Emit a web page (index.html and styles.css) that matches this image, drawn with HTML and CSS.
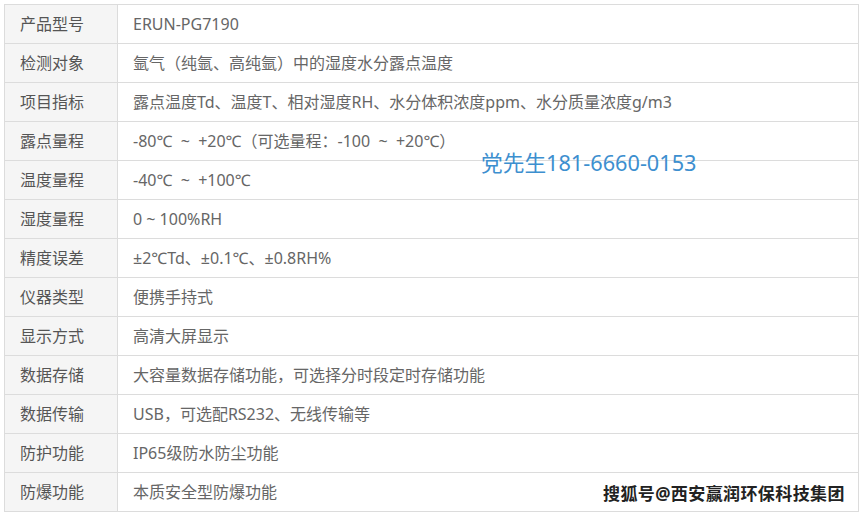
FILE: index.html
```html
<!DOCTYPE html>
<html lang="zh-CN">
<head>
    <meta charset="UTF-8">
    <title>产品参数</title>
    <link rel="stylesheet" href="styles.css">
</head>
<body>

    <!-- Spec table -->
    <div class="sheet">
        <table class="specs">
            <tr><th>产品型号</th><td>ERUN-PG7190</td></tr>
            <tr><th>检测对象</th><td>氩气（纯氩、高纯氩）中的湿度水分露点温度</td></tr>
            <tr><th>项目指标</th><td>露点温度Td、温度T、相对湿度RH、水分体积浓度ppm、水分质量浓度g/m3</td></tr>
            <tr><th>露点量程</th><td>-80℃&nbsp; ~ &nbsp;+20℃（可选量程：-100&nbsp; ~ &nbsp;+20℃）</td></tr>
            <tr><th>温度量程</th><td>-40℃&nbsp; ~ &nbsp;+100℃</td></tr>
            <tr><th>湿度量程</th><td>0 ~ 100%RH</td></tr>
            <tr><th>精度误差</th><td>±2℃Td、±0.1℃、±0.8RH%</td></tr>
            <tr><th>仪器类型</th><td>便携手持式</td></tr>
            <tr><th>显示方式</th><td>高清大屏显示</td></tr>
            <tr><th>数据存储</th><td>大容量数据存储功能，可选择分时段定时存储功能</td></tr>
            <tr><th>数据传输</th><td>USB，可选配RS232、无线传输等</td></tr>
            <tr><th>防护功能</th><td>IP65级防水防尘功能</td></tr>
            <tr><th>防爆功能</th><td>本质安全型防爆功能</td></tr>
        </table>

        <!-- Overlays -->
        <div class="contact">党先生181-6660-0153</div>
        <div class="mark">搜狐号@西安赢润环保科技集团</div>
    </div>

</body>
</html>
```

FILE: styles.css
```css
/* General styling */
* {
    margin: 0;
    padding: 0;
    box-sizing: border-box;
}

body {
    background-color: #fff;
    font-family: "Noto Sans", "Noto Sans CJK SC", sans-serif;
}

.sheet {
    position: relative;
    width: 863px;
    height: 515px;
    padding: 4px 0 0 4px;
}

/* Table styling */
.specs {
    width: 855px;
    border-collapse: collapse;
    font-size: 16px;
}

.specs th,
.specs td {
    height: 39px;
    border: 1px solid #dcdcdc;
    text-align: left;
    font-weight: normal;
    white-space: nowrap;
    line-height: 20px;
}

.specs th {
    width: 113px;
    padding-left: 15px;
    background-color: #f5f5f5;
    color: #555;
}

.specs td {
    padding-left: 15px;
    color: #666;
}

/* Overlays */
.contact {
    position: absolute;
    left: 481px;
    top: 150px;
    font-size: 21.7px;
    line-height: 26px;
    color: #3d8fcf;
}

.mark {
    position: absolute;
    left: 603px;
    top: 483px;
    font-size: 17px;
    line-height: 22px;
    font-weight: bold;
    letter-spacing: 0.4px;
    color: #222;
    text-shadow: 1px 0 #fff, -1px 0 #fff, 0 1px #fff, 0 -1px #fff;
}
```
